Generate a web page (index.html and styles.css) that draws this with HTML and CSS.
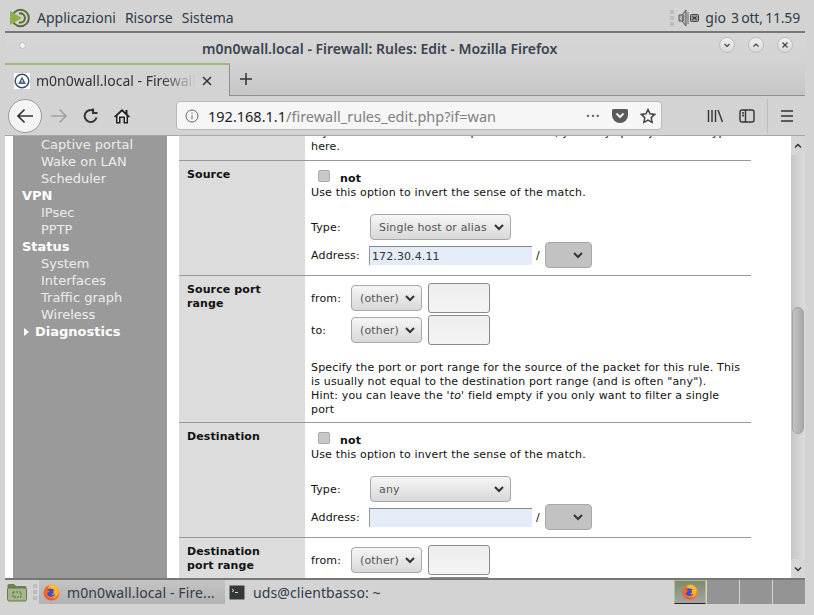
FILE: index.html
```html
<!DOCTYPE html>
<html lang="it">

<head>
  <meta charset="UTF-8">
  <title>m0n0wall.local - Firewall: Rules: Edit - Mozilla Firefox</title>
  <link rel="stylesheet" href="styles.css">
</head>

<body>
  <svg class="defs" width="0" height="0">
    <defs>
      <radialGradient id="foxFire" cx="0.6" cy="0.3" r="0.8">
        <stop offset="0" stop-color="#ffe34d" />
        <stop offset="0.5" stop-color="#ff9a1f" />
        <stop offset="1" stop-color="#e8304a" />
      </radialGradient>
      <symbol id="firefox" viewBox="0 0 18 18">
        <circle cx="9" cy="9" r="8.5" fill="url(#foxFire)" />
        <circle cx="8.5" cy="9" r="4.6" fill="#3a4fc0" />
        <path d="M6 1.5C3 3 1 6 1.4 10 2 14 5 17 9 17c-3-1-5-3-4.6-6 .3-2 2-3 3.6-3-.8-.8-1.600-1-2.400-.8C5.500 5 5.500 3 6 1.500z" fill="#f0622c" />
        <path d="M8 5.500c2-.6 4 0 4.800 1.500-.8-.3-1.800-.3-2.300.2.600.4.900 1 .8 1.800-.2 1.400-1.500 2.200-3 2 1.500 1 3.800.5 4.800-1.200.6 2-1 4.500-3.600 4.900 3.200.3 6-2 6-5.200C16.500 6 14 3.500 11 3.200c-1.200 0-2.300.6-3 2.300z" fill="#ffb52e" />
      </symbol>
    </defs>
  </svg>

  <div class="desktop">
    <header class="top-panel">
      <svg class="mint-logo" width="20" height="20" viewBox="0 0 20 20">
        <circle cx="10.500" cy="10" r="8.300" fill="none" stroke="#5b6e3c" stroke-width="2" />
        <path d="M9 5.600a4.600 4.600 0 1 1 0 8.800" fill="none" stroke="#5b6e3c" stroke-width="2" />
        <path d="M0 3 12 10 0 17z" fill="#8fb04f" />
      </svg>
      <nav class="panel-menu">
        <span>Applicazioni</span>
        <span>Risorse</span>
        <span>Sistema</span>
      </nav>
      <div class="tray">
        <span class="handle"><i></i><i></i><i></i></span>
        <svg width="21" height="18" viewBox="0 0 21 18">
          <path d="M1 6h3l4-5v16l-4-5H1z" fill="#b5b5b5" stroke="#555" />
          <path d="M5 6v6" stroke="#333" />
          <path d="M10 3v12" stroke="#666" />
          <rect x="12.500" y="5.500" width="8" height="7" rx="1" fill="#999" stroke="#444" />
          <path d="M14.500 7.500l4 3m0-3-4 3" stroke="#222" />
        </svg>
        <span class="clock"><span>gio</span><span class="clock-time">3 ott, 11.59</span></span>
      </div>
    </header>

    <div class="title-bar">
      <span class="window-dot"></span>
      <div class="window-title">m0n0wall.local - Firewall: Rules: Edit - Mozilla Firefox</div>
      <div class="window-buttons">
        <span class="win-btn"><svg width="8" height="8" viewBox="0 0 8 8"><path d="M1.500 3 4 5.500 6.500 3" /></svg></span>
        <span class="win-btn"><svg width="8" height="8" viewBox="0 0 8 8"><path d="M1.500 5.500 4 3 6.500 5.500" /></svg></span>
        <span class="win-btn"><svg width="8" height="8" viewBox="0 0 8 8"><path d="M1.500 1.500l5 5m0-5-5 5" /></svg></span>
      </div>
    </div>

    <div class="tab-bar">
      <div class="tab">
        <span class="favicon">
          <svg width="16" height="16" viewBox="0 0 16 16">
            <circle cx="8" cy="8" r="6.800" fill="#fff" stroke="#34506f" stroke-width="1.500" />
            <path d="M8 3.500 12 11H4z" fill="#4d6580" />
            <path d="M8 7v2.500" stroke="#fff" />
          </svg>
        </span>
        <span class="tab-label">m0n0wall.local - Firewall</span>
        <svg class="tab-close" width="12" height="12" viewBox="0 0 12 12"><path d="M2 2l8 8m0-8-8 8" /></svg>
      </div>
      <svg class="new-tab" width="16" height="16" viewBox="0 0 16 16"><path d="M8 2v12M2 8h12" /></svg>
    </div>

    <div class="nav-bar">
      <span class="back-btn">
        <svg width="18" height="16" viewBox="0 0 18 16"><path d="M17 8H2M8.500 1.500 2 8l6.500 6.500" /></svg>
      </span>
      <svg class="nav-icon forward" width="18" height="16" viewBox="0 0 18 16"><path d="M1 8h15M9.500 1.500 16 8l-6.500 6.500" /></svg>
      <svg class="nav-icon reload" width="16" height="16" viewBox="0 0 16 16"><path d="M13.500 9.500A6 6 0 1 1 11 3M10 .5V5h4.500" /></svg>
      <svg class="home" width="16" height="16" viewBox="0 0 16 16"><path d="M8 1 0 8.500l1.200 1.100L2 9v6.500h4.500V10h3v5.500H14V9l.8.600L16 8.500l-2.500-2.300V2h-2v2.300z" fill="#222" /><path d="M8 3.500 12.500 7.800v6.200h-1.500V8.500H5V14H3.500V7.800z" fill="#e6e6e6" /></svg>
      <div class="url-bar">
        <svg class="info" width="14" height="14" viewBox="0 0 14 14"><circle cx="7" cy="7" r="6" /><path d="M7 6.200v4M7 3.500v1.300" /></svg>
        <div class="url"><span class="host">192.168.1.1</span>/firewall_rules_edit.php?if=wan</div>
        <span class="dots">•••</span>
        <svg class="pocket" width="18" height="16" viewBox="0 0 18 16"><path d="M1 2.500A1.500 1.500 0 0 1 2.500 1h13A1.500 1.500 0 0 1 17 2.500V7A8 8 0 0 1 1 7z" fill="#5a5a5a" /><path d="M5.500 5.500 9 9l3.500-3.500" fill="none" stroke="#eee" stroke-width="2" /></svg>
        <svg class="star" width="16" height="16" viewBox="0 0 16 16"><path d="M8 1.500l2 4.300 4.700.6-3.500 3.200.9 4.700L8 12l-4.100 2.300.9-4.700L1.300 6.400 6 5.800z" /></svg>
      </div>
      <div class="nav-right">
        <svg class="library" width="17" height="16" viewBox="0 0 17 16"><path d="M1.500 2v12M5 2v12M8.500 2v12M11 2l4.500 12" /></svg>
        <svg class="sidebar-icon" width="16" height="14" viewBox="0 0 16 14"><rect x="1" y="1" width="14" height="12" rx="2" /><path d="M6.500 1v12M3 4h2M3 6.500h2" /></svg>
        <span class="nav-sep"></span>
        <svg class="menu" width="14" height="14" viewBox="0 0 14 14"><path d="M1 2h12M1 7h12M1 12h12" /></svg>
      </div>
    </div>

    <main class="viewport">
      <div class="page">
        <aside class="side-menu">
          <a class="sub">Captive portal</a>
          <a class="sub">Wake on LAN</a>
          <a class="sub">Scheduler</a>
          <a class="group">VPN</a>
          <a class="sub">IPsec</a>
          <a class="sub">PPTP</a>
          <a class="group">Status</a>
          <a class="sub">System</a>
          <a class="sub">Interfaces</a>
          <a class="sub">Traffic graph</a>
          <a class="sub">Wireless</a>
          <a class="group closed"><span class="arrow"></span>Diagnostics</a>
        </aside>

        <section class="rule-form">
          <div class="row row-first">
            <div class="cell-label"></div>
            <div class="cell-field">
              If you selected ICMP for the protocol above, you may specify an ICMP type here.
            </div>
          </div>

          <div class="row">
            <div class="cell-label">Source</div>
            <div class="cell-field">
              <div class="not-line"><input type="checkbox"><b>not</b></div>
              <div>Use this option to invert the sense of the match.</div>
              <div class="line line-type">
                <span class="caption">Type:</span>
                <select class="sel sel-type"><option>Single host or alias</option></select>
              </div>
              <div class="line">
                <span class="caption">Address:</span>
                <input class="addr" type="text" value="172.30.4.11">
                <span class="slash">/</span>
                <select class="sel sel-mask" disabled></select>
              </div>
            </div>
          </div>

          <div class="row">
            <div class="cell-label">Source port<br>range</div>
            <div class="cell-field">
              <div class="line port-line">
                <span class="caption caption-port">from:</span>
                <select class="sel sel-port"><option>(other)</option></select>
                <input class="port" type="text">
              </div>
              <div class="line port-line">
                <span class="caption caption-port">to:</span>
                <select class="sel sel-port"><option>(other)</option></select>
                <input class="port" type="text">
              </div>
              <p class="hint">Specify the port or port range for the source of the packet for this rule. This is usually not equal to the destination port range (and is often "any").<br>Hint: you can leave the '<i>to</i>' field empty if you only want to filter a single port</p>
            </div>
          </div>

          <div class="row">
            <div class="cell-label">Destination</div>
            <div class="cell-field">
              <div class="not-line"><input type="checkbox"><b>not</b></div>
              <div>Use this option to invert the sense of the match.</div>
              <div class="line line-type">
                <span class="caption">Type:</span>
                <select class="sel sel-type"><option>any</option></select>
              </div>
              <div class="line">
                <span class="caption">Address:</span>
                <input class="addr" type="text">
                <span class="slash">/</span>
                <select class="sel sel-mask" disabled></select>
              </div>
            </div>
          </div>

          <div class="row">
            <div class="cell-label">Destination<br>port range</div>
            <div class="cell-field">
              <div class="line port-line">
                <span class="caption caption-port">from:</span>
                <select class="sel sel-port"><option>(other)</option></select>
                <input class="port" type="text">
              </div>
              <div class="line port-line">
                <span class="caption caption-port"></span>
                <select class="sel sel-port"></select>
                <input class="port" type="text">
              </div>
            </div>
          </div>
        </section>
      </div>

      <div class="scrollbar">
        <span class="scroll-btn"><svg width="8" height="6" viewBox="0 0 8 6"><path d="M1 4.500 4 1.500 7 4.500" /></svg></span>
        <span class="scroll-thumb"></span>
        <span class="scroll-btn scroll-down"><svg width="8" height="6" viewBox="0 0 8 6"><path d="M1 1.500 4 4.500 7 1.500" /></svg></span>
      </div>
    </main>

    <footer class="task-bar">
      <svg class="folder" width="20" height="20" viewBox="0 0 20 20">
        <path d="M.5 3.500a1.500 1.500 0 0 1 1.500-1.500h5l2 2h9a1.500 1.500 0 0 1 1.500 1.500v2H.5z" fill="#6d7f52" />
        <rect x=".5" y="6" width="19" height="13" rx="1.500" fill="#a3b78a" stroke="#66774e" />
        <rect x="6" y="10" width="8" height="5" fill="none" stroke="#59683f" stroke-dasharray="2 1" />
      </svg>
      <span class="handle"><i></i><i></i><i></i></span>
      <div class="task task-active">
        <svg width="17" height="17"><use href="#firefox" /></svg>
        <span>m0n0wall.local - Fire...</span>
      </div>
      <div class="task">
        <svg width="16" height="15" viewBox="0 0 16 15"><rect x=".5" y=".5" width="15" height="14" rx="1" fill="#333a36" stroke="#888" /><path d="M3 4l2 1.500L3 7M6 7.500h3" fill="none" stroke="#ddd" /></svg>
        <span>uds@clientbasso: ~</span>
      </div>
      <div class="workspaces">
        <span class="ws ws-active"><svg width="16" height="16"><use href="#firefox" /></svg></span>
        <span class="ws"></span>
        <span class="ws"></span>
        <span class="ws"></span>
      </div>
    </footer>
  </div>
</body>

</html>
```

FILE: styles.css
```css
* {
  box-sizing: border-box;
}

html,
body {
  margin: 0;
  height: 100%;
  overflow: hidden;
}

body {
  background-color: #d3d3d3;
  font-family: "Noto Sans", sans-serif;
  color: #2f3b4a;
}

.defs {
  display: block;
  height: 0;
}

.desktop {
  width: 800px;
  margin-left: 5px;
  height: 604px;
  display: flex;
  flex-direction: column;
}

/* top gnome panel */
.top-panel {
  height: 33px;
  flex: none;
  display: flex;
  align-items: center;
  padding: 4px 5px 0;
  border-bottom: 2px solid #777;
}

.mint-logo {
  flex: none;
}

.panel-menu {
  display: flex;
  gap: 9px;
  margin-left: 7px;
  font-size: 14px;
}

.tray {
  margin-left: auto;
  display: flex;
  align-items: center;
  font-size: 14px;
}

.clock {
  display: flex;
  gap: 5px;
  margin-left: 6px;
}

.clock-time {
  letter-spacing: -0.2px;
  word-spacing: -1px;
}

.handle {
  display: flex;
  flex-direction: column;
  gap: 2px;
  margin-right: 4px;
}

.handle i {
  display: block;
  width: 4px;
  height: 4px;
  background-color: #bdbdbd;
}

/* window title */
.title-bar {
  height: 29px;
  flex: none;
  display: flex;
  align-items: center;
  background: linear-gradient(#d6d6d6, #d3d3d3);
}

.window-dot {
  width: 7px;
  height: 7px;
  margin-left: 14px;
  margin-top: -5px;
  border-radius: 50%;
  background-color: #f2f2f2;
  border: 1px solid #bbb;
}

.window-title {
  margin-left: 176px;
  padding-top: 2px;
  font-size: 14px;
  font-weight: 600;
  color: #3a4350;
}

.window-buttons {
  margin-left: auto;
  margin-right: 12px;
  margin-top: -5px;
  display: flex;
  gap: 13px;
}

.win-btn {
  width: 16px;
  height: 16px;
  border-radius: 50%;
  border: 1px solid #bcbcbc;
  background: linear-gradient(#f0f0f0, #d8d8d8);
  display: flex;
  align-items: center;
  justify-content: center;
}

.win-btn svg path {
  fill: none;
  stroke: #444;
  stroke-width: 1.2;
}

/* tabs */
.tab-bar {
  height: 34px;
  flex: none;
  display: flex;
  align-items: center;
  background: linear-gradient(#d3d3d3, #c6c6c6);
  border-bottom: 1px solid #8f8f8f;
}

.tab {
  width: 225px;
  height: 33px;
  margin: 1px 0 -1px;
  display: flex;
  align-items: center;
  background-color: #d3d3d3;
  border-top: 2px solid #9dbb78;
  border-right: 1px solid #8f8f8f;
  padding-left: 9px;
  font-size: 14px;
}

.favicon {
  width: 16px;
  height: 16px;
  background-color: #fff;
  flex: none;
}

.favicon svg {
  display: block;
}

.tab-label {
  margin-left: 6px;
  width: 166px;
  white-space: nowrap;
  overflow: hidden;
  -webkit-mask-image: linear-gradient(to right, #000 125px, transparent 160px);
  mask-image: linear-gradient(to right, #000 125px, transparent 160px);
  color: #333;
}

.tab-close path,
.new-tab path {
  fill: none;
  stroke: #333;
  stroke-width: 1.500;
}

.tab-close {
  margin-left: -1px;
}

.new-tab {
  margin-left: 8px;
}

/* navigation */
.nav-bar {
  height: 40px;
  flex: none;
  display: flex;
  align-items: center;
  background-color: #d3d3d3;
  border-bottom: 1px solid #a8a8a8;
  padding-left: 3px;
}

.back-btn {
  width: 34px;
  height: 34px;
  border-radius: 50%;
  border: 1px solid #9a9a9a;
  background-color: #f4f4f4;
  display: flex;
  align-items: center;
  justify-content: center;
}

.back-btn path,
.nav-icon path {
  fill: none;
  stroke: #333;
  stroke-width: 1.700;
}

.nav-icon.forward {
  margin-left: 8px;
}

.nav-icon.forward path {
  stroke: #a2a2a2;
}

.nav-icon.reload {
  margin-left: 15px;
}

.nav-icon.reload path {
  stroke-width: 2;
}

.home {
  margin-left: 15px;
}

.url-bar {
  width: 486px;
  height: 29px;
  margin-left: 46px;
  display: flex;
  align-items: center;
  background-color: #f6f6f6;
  border: 1px solid #b9b9b9;
  border-radius: 4px;
  padding-left: 8px;
}

.info circle,
.info path {
  fill: none;
  stroke: #666;
}

.url {
  margin-left: 9px;
  font-size: 14.500px;
  color: #808080;
  white-space: nowrap;
}

.host {
  color: #222;
}

.dots {
  margin-left: auto;
  font-size: 9px;
  letter-spacing: 1.500px;
  color: #555;
}

.pocket {
  margin-left: 10px;
}

.star {
  margin-left: 11px;
  margin-right: 5px;
}

.star path {
  fill: none;
  stroke: #444;
  stroke-width: 1.500;
}

.nav-right {
  display: flex;
  align-items: center;
  margin-left: 45px;
}

.library path,
.sidebar-icon rect,
.sidebar-icon path,
.menu path {
  fill: none;
  stroke: #333;
  stroke-width: 1.400;
}

.sidebar-icon {
  margin-left: 15px;
}

.nav-sep {
  width: 1px;
  height: 34px;
  margin-left: 12px;
  background-color: #bdbdbd;
}

.menu {
  margin-left: 12px;
}

/* page inside the browser */
.viewport {
  flex: 1;
  display: flex;
  min-height: 0;
  overflow: hidden;
  background-color: #fff;
}

.page {
  flex: 1;
  display: flex;
  padding-left: 8px;
  font-family: "DejaVu Sans", sans-serif;
  font-size: 11px;
  line-height: 14px;
  letter-spacing: 0.16px;
  color: #111;
  overflow: hidden;
}

.side-menu {
  width: 154px;
  flex: none;
  background-color: #9a9a9a;
  font-size: 13px;
  line-height: 17px;
  letter-spacing: 0;
  color: #ececec;
  padding-left: 9px;
}

.side-menu a {
  display: block;
}

.side-menu .sub {
  padding-left: 19px;
}

.side-menu .group {
  font-weight: bold;
  color: #fff;
}

.side-menu .closed {
  display: flex;
  align-items: center;
}

.arrow {
  width: 0;
  height: 0;
  margin: 0 6px 0 2px;
  border-left: 5px solid #fff;
  border-top: 4px solid transparent;
  border-bottom: 4px solid transparent;
}

.rule-form {
  width: 572px;
  flex: none;
  margin-left: 12px;
}

.row {
  display: flex;
  border-bottom: 1px solid #999;
}

.row-first {
  margin-top: -11px;
}

.cell-label {
  width: 126px;
  flex: none;
  background-color: #dcdcdc;
  padding: 7px 8px 5px;
  font-weight: bold;
  letter-spacing: 0.1px;
}

.cell-field {
  flex: 1;
  padding: 11px 6px 7px;
}

.row-first .cell-field {
  padding: 1px 6px 6px;
}

.not-line {
  display: flex;
  align-items: center;
  height: 14px;
}

.not-line input {
  appearance: none;
  width: 12px;
  height: 12px;
  margin: -6px 10px 0 7px;
  border: 1px solid #aaa;
  border-radius: 2px;
  background-color: #c8c8c8;
}

.line {
  display: flex;
  align-items: center;
  margin-top: 2px;
}

.line-type {
  margin-top: 14px;
}

.caption {
  width: 59px;
  flex: none;
  padding-top: 2px;
}

.caption-port {
  width: 40px;
}

.sel {
  appearance: none;
  height: 26px;
  padding: 0 0 0 8px;
  font-family: "DejaVu Sans", sans-serif;
  font-size: 11px;
  letter-spacing: 0.16px;
  color: #555;
  border: 1px solid #a8a8a8;
  border-radius: 4px;
  background-color: #e0e0e0;
  background-image: url("data:image/svg+xml,%3Csvg xmlns='http://www.w3.org/2000/svg' width='12' height='8'%3E%3Cpath d='M2 2l4 4 4-4' fill='none' stroke='%23333' stroke-width='2'/%3E%3C/svg%3E"), linear-gradient(#f6f6f6, #d8d8d8);
  background-repeat: no-repeat;
  background-position: right 5px center, 0 0;
}

.sel-type {
  width: 141px;
}

.sel-port {
  width: 71px;
}

.sel-mask {
  width: 47px;
  opacity: 1;
  background-image: url("data:image/svg+xml,%3Csvg xmlns='http://www.w3.org/2000/svg' width='12' height='8'%3E%3Cpath d='M2 2l4 4 4-4' fill='none' stroke='%23333' stroke-width='2'/%3E%3C/svg%3E");
  background-color: #c2c2c2;
  background-position: right 7px center;
}

.addr {
  width: 163px;
  height: 19px;
  margin-left: -1px;
  padding: 1px 0 0 2px;
  font-family: "DejaVu Sans", sans-serif;
  font-size: 11px;
  letter-spacing: 0.1px;
  color: #333;
  border: 0;
  border-top: 1px solid #888;
  border-left: 1px solid #999;
  background-color: #e4ecf7;
  outline: none;
}

.slash {
  margin: 0 5px 0 4px;
  padding-top: 2px;
}

.port-line {
  margin-top: 2px;
  height: 30px;
}

.row .cell-field > .port-line:first-child {
  margin-top: -4px;
}

.port {
  width: 62px;
  height: 30px;
  margin-left: 6px;
  border: 1px solid #8a8a8a;
  border-radius: 3px;
  background: linear-gradient(#eee, #f4f4f4);
  outline: none;
}

.hint {
  margin: 16px 0 -2px;
}

/* scrollbar */
.scrollbar {
  width: 14px;
  flex: none;
  display: flex;
  flex-direction: column;
  background: linear-gradient(to right, #c6c6c6, #dcdcdc);
}

.scroll-btn {
  height: 19px;
  flex: none;
  display: flex;
  align-items: center;
  justify-content: center;
  background-color: #d6d6d6;
}

.scroll-btn path {
  fill: none;
  stroke: #333;
  stroke-width: 1.500;
}

.scroll-thumb {
  height: 127px;
  flex: none;
  margin: 152px 1px 0;
  border-radius: 6px;
  border: 1px solid #a4a4a4;
  background: linear-gradient(to right, #c2c2c2, #a8a8a8);
}

.scroll-down {
  margin-top: auto;
}

/* bottom panel */
.task-bar {
  height: 26px;
  flex: none;
  display: flex;
  align-items: center;
  border-top: 2px solid #777;
  padding-left: 2px;
  font-size: 14px;
}

.task-bar .handle {
  margin: 0 2px 0 6px;
}

.task {
  height: 24px;
  display: flex;
  align-items: center;
  gap: 8px;
  padding-left: 4px;
  letter-spacing: 0.1px;
}

.task-active {
  width: 186px;
  gap: 7px;
  padding-left: 4px;
  background: linear-gradient(#c4c4c4, #b2b2b2);
}

.workspaces {
  margin-left: auto;
  display: flex;
  height: 24px;
  gap: 1px;
}

.ws {
  width: 32px;
  background-color: #949494;
}

.ws-active {
  width: 32px;
  display: flex;
  align-items: center;
  justify-content: center;
  background: linear-gradient(#7d8a6c, #a4a4a4);
  border: 1px solid #a9c287;
  border-bottom: 1px solid #222;
}
```
